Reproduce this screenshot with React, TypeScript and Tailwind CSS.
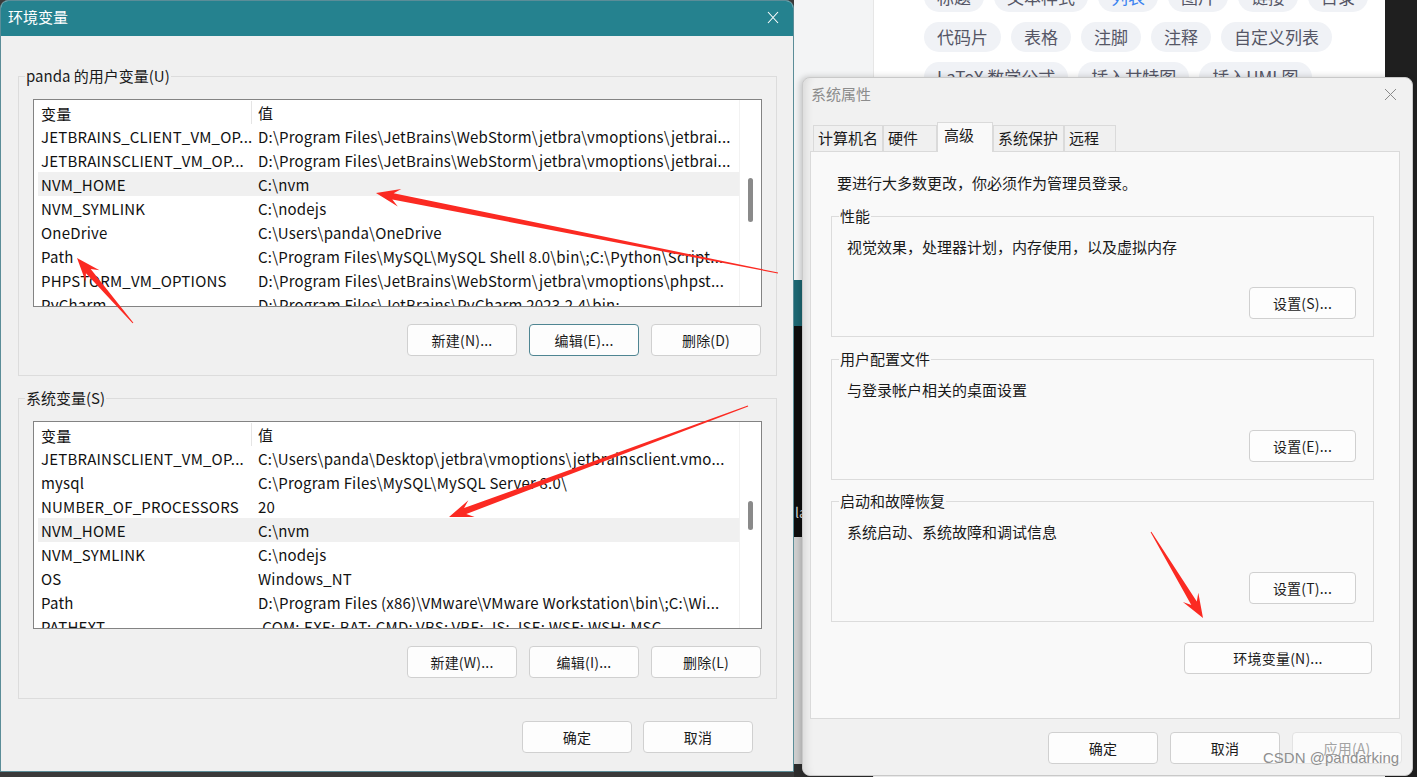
import React from "react";

type Row = { name: string; value: string; selected?: boolean };

const userRows: Row[] = [
  { name: "JETBRAINS_CLIENT_VM_OP...", value: "D:\\Program Files\\JetBrains\\WebStorm\\jetbra\\vmoptions\\jetbrai..." },
  { name: "JETBRAINSCLIENT_VM_OP...", value: "D:\\Program Files\\JetBrains\\WebStorm\\jetbra\\vmoptions\\jetbrai..." },
  { name: "NVM_HOME", value: "C:\\nvm", selected: true },
  { name: "NVM_SYMLINK", value: "C:\\nodejs" },
  { name: "OneDrive", value: "C:\\Users\\panda\\OneDrive" },
  { name: "Path", value: "C:\\Program Files\\MySQL\\MySQL Shell 8.0\\bin\\;C:\\Python\\Script..." },
  { name: "PHPSTORM_VM_OPTIONS", value: "D:\\Program Files\\JetBrains\\WebStorm\\jetbra\\vmoptions\\phpst..." },
  { name: "PyCharm", value: "D:\\Program Files\\JetBrains\\PyCharm 2023.2.4\\bin;" },
];

const sysRows: Row[] = [
  { name: "JETBRAINSCLIENT_VM_OP...", value: "C:\\Users\\panda\\Desktop\\jetbra\\vmoptions\\jetbrainsclient.vmo..." },
  { name: "mysql", value: "C:\\Program Files\\MySQL\\MySQL Server 8.0\\" },
  { name: "NUMBER_OF_PROCESSORS", value: "20" },
  { name: "NVM_HOME", value: "C:\\nvm", selected: true },
  { name: "NVM_SYMLINK", value: "C:\\nodejs" },
  { name: "OS", value: "Windows_NT" },
  { name: "Path", value: "D:\\Program Files (x86)\\VMware\\VMware Workstation\\bin\\;C:\\Wi..." },
  { name: "PATHEXT", value: ".COM;.EXE;.BAT;.CMD;.VBS;.VBE;.JS;.JSE;.WSF;.WSH;.MSC" },
];

const tagRows = [
  ["标题", "文本样式", "列表", "图片", "链接", "目录"],
  ["代码片", "表格", "注脚", "注释", "自定义列表"],
  ["LaTeX 数学公式", "插入甘特图", "插入UML图"],
];

function Btn({
  children,
  focused = false,
  disabled = false,
  className = "w-[110px]",
}: {
  children: React.ReactNode;
  focused?: boolean;
  disabled?: boolean;
  className?: string;
}) {
  return (
    <button
      type="button"
      className={`flex h-[32px] shrink-0 items-center justify-center rounded-[4px] border text-[14px] tracking-[0.2px] ${
        focused ? "border-[#4f8592]" : disabled ? "border-[#e3e3e3]" : "border-[#d0d0d0]"
      } ${disabled ? "bg-[#fbfbfb] text-[#a3a3a3]" : "bg-[#fdfdfd] text-[#1b1b1b]"} ${className}`}
    >
      {children}
    </button>
  );
}

function Group({
  label,
  legendClass,
  className = "",
  children,
}: {
  label: string;
  legendClass: string;
  className?: string;
  children: React.ReactNode;
}) {
  return (
    <fieldset className={`m-0 min-w-0 border border-[#dcdcdc] p-0 ${className}`}>
      <legend className={`px-[1px] text-[15px] leading-[20px] ${legendClass}`}>{label}</legend>
      {children}
    </fieldset>
  );
}

function VarList({ rows, thumbTop, thumbHeight }: { rows: Row[]; thumbTop: number; thumbHeight: number }) {
  return (
    <div className="flex h-[208px] border border-[#838383] bg-white text-[15px] tracking-[0.2px] text-[#111]">
      <div className="min-w-0 flex-1 overflow-hidden">
        <div className="ml-[4px] flex h-[24px] items-center leading-[24px]">
          <div className="h-[23px] w-[214px] shrink-0 border-r border-[#e5e5e5] pl-[3px] pt-[1px]">变量</div>
          <div className="pl-[6px] pt-[1px]">值</div>
        </div>
        {rows.map((row) => (
          <div
            key={row.name + row.value}
            className={`ml-[4px] flex h-[24px] items-center leading-[24px] ${row.selected ? "bg-[#f0f0f0]" : ""}`}
          >
            <div className="w-[214px] shrink-0 overflow-hidden whitespace-nowrap pl-[3px] pt-[1px]">{row.name}</div>
            <div className="min-w-0 flex-1 overflow-hidden whitespace-nowrap pl-[6px] pt-[1px]">{row.value}</div>
          </div>
        ))}
      </div>
      <div className="w-[22px] shrink-0 border-l border-[#f2f2f2]">
        <div
          className="mx-auto w-[5px] rounded-full bg-[#8a8a8a]"
          style={{ marginTop: thumbTop, height: thumbHeight }}
        />
      </div>
    </div>
  );
}

function Background() {
  return (
    <div className="absolute inset-0 flex">
      <div className="w-[794px] shrink-0 bg-[#3a3a3a]" />
      <div className="flex w-[80px] shrink-0 flex-col border-r border-[#e6e6e6] bg-[#f3f4f5]">
        <div className="h-[280px]" />
        <div className="h-[46px] bg-[#1d6873]" />
        <div className="h-[211px] bg-[#0e0e0e] pl-[1px] pt-[176px] text-[14px] text-[#d8d8d8]">la</div>
        <div className="h-[227px] bg-[#d0d0d0]" />
        <div className="flex-1 bg-[#2d2d2d]" />
      </div>
      <div className="w-[511px] shrink-0 bg-white pl-[50px]">
        <div className="mt-[-18px] flex flex-col gap-[10px]">
          {tagRows.map((row, i) => (
            <div key={i} className="flex gap-[10px]">
              {row.map((tag) => (
                <span
                  key={tag}
                  className={`flex h-[30px] items-center whitespace-nowrap rounded-full bg-[#f0f2f6] px-[13px] text-[17px] ${
                    tag === "列表" ? "text-[#3b82f0]" : "text-[#555666]"
                  }`}
                >
                  {tag}
                </span>
              ))}
            </div>
          ))}
        </div>
      </div>
      <div className="flex-1 bg-[#1f1f1f]" />
    </div>
  );
}

function EnvDialog() {
  return (
    <div className="absolute left-0 top-0 flex h-[772px] w-[794px] flex-col overflow-hidden rounded-t-[8px] border border-[#5b8d98] bg-[#f0f0f0]">
      <div className="flex h-[35px] shrink-0 items-center justify-between bg-[#25828f] pb-[3px] pl-[7px] pr-[14px]">
        <span className="text-[15px] text-white">环境变量</span>
        <svg width="12" height="13" viewBox="0 0 12 13">
          <path d="M1 1L11 12M11 1L1 12" stroke="white" strokeWidth="1.1" fill="none" />
        </svg>
      </div>
      <div className="pl-[17px] pr-[16px] pt-[30px]">
        <Group label="panda 的用户变量(U)" legendClass="ml-[6px]">
          <div className="px-[14px] pb-[19px] pt-[13px]">
            <VarList rows={userRows} thumbTop={78} thumbHeight={44} />
            <div className="mt-[17px] flex justify-end gap-[12px] pr-[1px]">
              <Btn>新建(N)...</Btn>
              <Btn focused>编辑(E)...</Btn>
              <Btn>删除(D)</Btn>
            </div>
          </div>
        </Group>
        <Group label="系统变量(S)" legendClass="ml-[6px]" className="mt-[12px]">
          <div className="px-[14px] pb-[20px] pt-[13px]">
            <VarList rows={sysRows} thumbTop={79} thumbHeight={29} />
            <div className="mt-[17px] flex justify-end gap-[12px] pr-[1px]">
              <Btn>新建(W)...</Btn>
              <Btn>编辑(I)...</Btn>
              <Btn>删除(L)</Btn>
            </div>
          </div>
        </Group>
        <div className="mt-[22px] flex justify-end gap-[11px] pr-[24px]">
          <Btn>确定</Btn>
          <Btn>取消</Btn>
        </div>
      </div>
    </div>
  );
}

function SysDialog() {
  const tabs = [
    { label: "计算机名", w: "w-[70px]" },
    { label: "硬件", w: "w-[54px]" },
    { label: "高级", w: "w-[56px]", active: true },
    { label: "系统保护", w: "w-[71px]" },
    { label: "远程", w: "w-[52px]" },
  ];
  const groups = [
    { label: "性能", text: "视觉效果，处理器计划，内存使用，以及虚拟内存", btn: "设置(S)...", mt: "mt-[13px]" },
    { label: "用户配置文件", text: "与登录帐户相关的桌面设置", btn: "设置(E)...", mt: "mt-[12px]" },
    { label: "启动和故障恢复", text: "系统启动、系统故障和调试信息", btn: "设置(T)...", mt: "mt-[11px]" },
  ];
  return (
    <div className="absolute left-[802px] top-[77px] flex h-[699px] w-[611px] flex-col rounded-[8px] border border-[#c9c9c9] bg-[#f1f1f1] shadow-[inset_10px_0_10px_-8px_rgba(0,0,0,0.12),-2px_0_6px_rgba(0,0,0,0.2)]">
      <div className="flex h-[32px] shrink-0 items-center justify-between pl-[8px] pr-[15px]">
        <span className="text-[15px] text-[#8c8c8c]">系统属性</span>
        <svg width="13" height="13" viewBox="0 0 13 13">
          <path d="M1 1L12 12M12 1L1 12" stroke="#8a8a8a" strokeWidth="1" fill="none" />
        </svg>
      </div>
      <div className="pl-[7px] pr-[12px]">
        <div className="flex h-[41px] items-end pl-[3px]">
          {tabs.map((t) =>
            t.active ? (
              <div
                key={t.label}
                className={`relative z-10 mb-[-1px] h-[30px] border border-b-0 border-[#dadada] bg-[#f9f9f9] pl-[6px] pt-[2px] text-[15px] leading-[20px] ${t.w}`}
              >
                {t.label}
              </div>
            ) : (
              <div
                key={t.label}
                className={`h-[26px] border border-b-0 border-[#dadada] bg-[#f0f0f0] pl-[4px] pt-[2px] text-[15px] leading-[20px] ${t.w}`}
              >
                {t.label}
              </div>
            )
          )}
        </div>
        <div className="flex h-[568px] flex-col border border-[#dadada] bg-[#f9f9f9] pl-[20px] pr-[25px] pt-[21px]">
          <div className="pl-[6px] text-[15px] leading-[20px]">要进行大多数更改，你必须作为管理员登录。</div>
          {groups.map((g) => (
            <Group key={g.label} label={g.label} legendClass="ml-[7px]" className={g.mt}>
              <div className="pb-[17px] pl-[15px] pr-[17px] pt-[11px]">
                <div className="text-[15px] leading-[20px]">{g.text}</div>
                <div className="mt-[30px] flex justify-end">
                  <Btn className="w-[107px]">{g.btn}</Btn>
                </div>
              </div>
            </Group>
          ))}
          <div className="mt-[20px] flex justify-end pr-[2px]">
            <Btn className="w-[188px]">环境变量(N)...</Btn>
          </div>
        </div>
      </div>
      <div className="mt-[13px] flex justify-end gap-[12px] pr-[10px]">
        <Btn>确定</Btn>
        <Btn>取消</Btn>
        <Btn disabled>应用(A)</Btn>
      </div>
    </div>
  );
}

function arrowPoints(x1: number, y1: number, x2: number, y2: number, head = 24, wing = 9, neck = 3.2, tail = 0.5) {
  const dx = x2 - x1;
  const dy = y2 - y1;
  const len = Math.hypot(dx, dy);
  const ux = dx / len;
  const uy = dy / len;
  const nx = -uy;
  const ny = ux;
  const bx = x2 - ux * head;
  const by = y2 - uy * head;
  const cx = x2 - ux * head * 0.72;
  const cy = y2 - uy * head * 0.72;
  const pts = [
    [x1 + nx * tail, y1 + ny * tail],
    [cx + nx * neck, cy + ny * neck],
    [bx + nx * wing, by + ny * wing],
    [x2, y2],
    [bx - nx * wing, by - ny * wing],
    [cx - nx * neck, cy - ny * neck],
    [x1 - nx * tail, y1 - ny * tail],
  ];
  return pts.map((p) => `${p[0].toFixed(1)},${p[1].toFixed(1)}`).join(" ");
}

function Arrows() {
  const arrows = [
    [778, 273, 376, 193],
    [133, 323, 77, 258],
    [748, 406, 449, 517],
    [1151, 532, 1203, 618],
  ];
  return (
    <svg className="pointer-events-none absolute left-0 top-0" width="1417" height="777">
      {arrows.map((a, i) => (
        <polygon key={i} points={arrowPoints(a[0], a[1], a[2], a[3])} fill="#fb2a22" />
      ))}
    </svg>
  );
}

export default function App() {
  return (
    <div className="relative h-[777px] w-[1417px] overflow-hidden bg-[#3a3a3a] font-['Noto_Sans_CJK_SC','Noto_Sans',sans-serif] text-[#1a1a1a]">
      <Background />
      <EnvDialog />
      <SysDialog />
      <Arrows />
      <div className="pointer-events-none absolute left-[1263px] top-[747px] font-['Liberation_Sans',sans-serif] text-[15px] text-[#8f8f8f]">
        CSDN @pandarking
      </div>
    </div>
  );
}
